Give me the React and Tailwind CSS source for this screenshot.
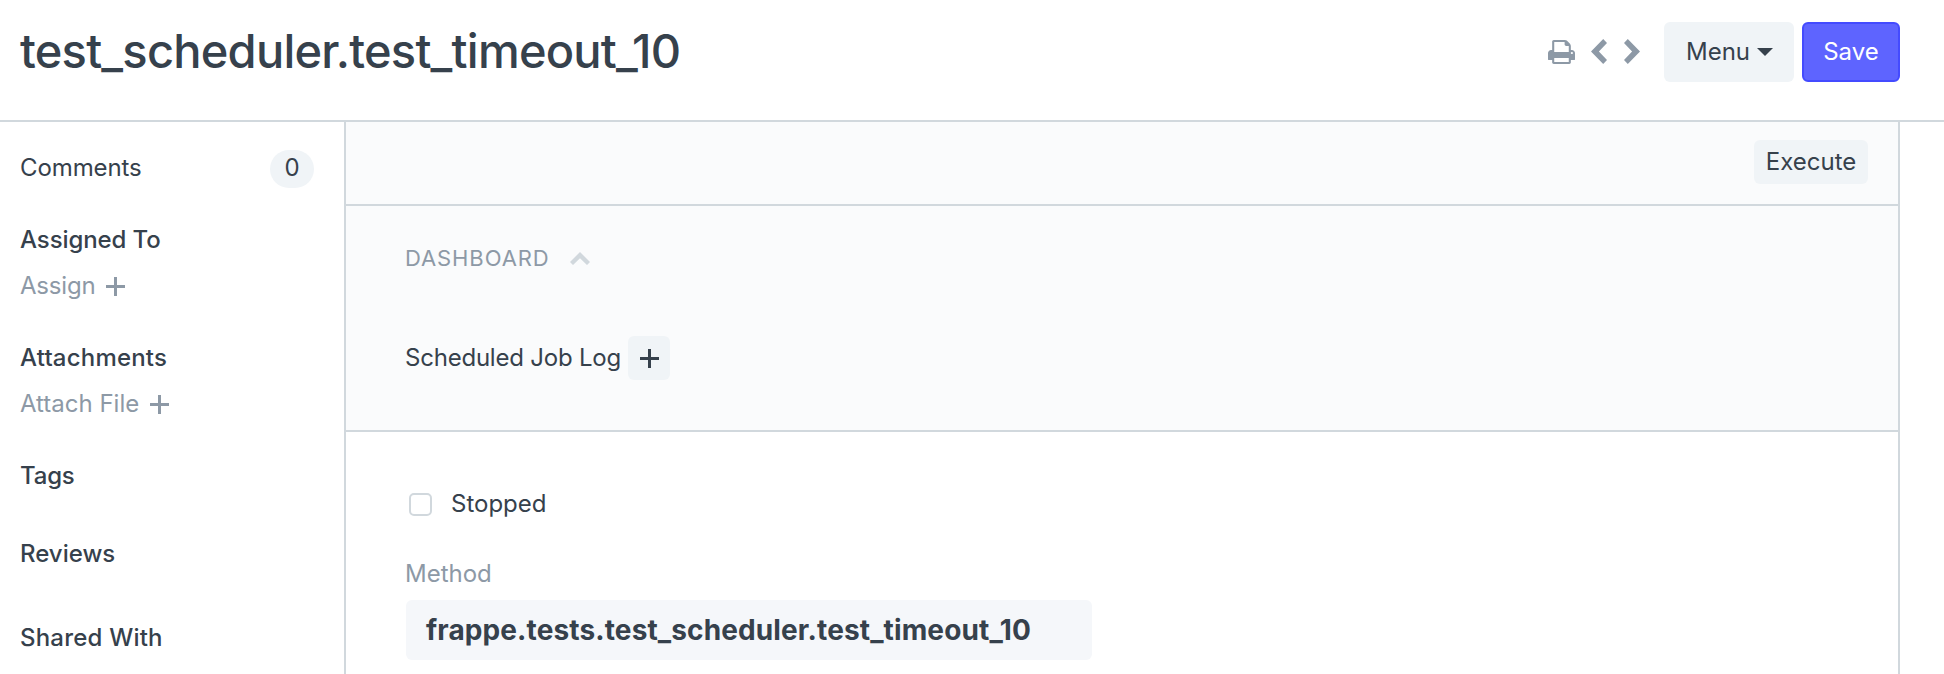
function PrintIcon() {
  return (
    <svg viewBox="0 128 1664 1536" preserveAspectRatio="none" className="h-6 w-[27px]" fill="currentColor">
      <path d="M384 1536h896v-256h-896v256zM384 896h896v-384h-160q-40 0-68-28t-28-68v-160h-640v640zM1536 960q0-26-19-45t-45-19-45 19-19 45 19 45 45 19 45-19 19-45zM1664 960v416q0 13-9.5 22.5t-22.5 9.5h-224v160q0 40-28 68t-68 28h-960q-40 0-68-28t-28-68v-160h-224q-13 0-22.5-9.5t-9.5-22.5v-416q0-79 56.5-135.5t135.5-56.5h64v-544q0-40 28-68t68-28h672q40 0 88 20t76 48l152 152q28 28 48 76t20 88v256h64q79 0 135.5 56.5t56.5 135.5z" />
    </svg>
  );
}

function Chevron({ className = "" }) {
  return (
    <svg viewBox="0 0 16 25" className={`h-[25px] w-4 ${className}`} fill="currentColor">
      <path d="M12.2 0 16 3.9 7.9 12.5 16 21.1 12.2 25 0 12.5z" />
    </svg>
  );
}

function CollapseIcon() {
  return (
    <svg viewBox="0 0 20 13" className="h-[13px] w-5 text-[#d1d8dd]" fill="currentColor">
      <path d="M10 0 20 10 17 13 10 6.2 3 13 0 10z" />
    </svg>
  );
}

function Plus() {
  return (
    <svg viewBox="0 0 19 19" className="size-[19px]" fill="none" stroke="currentColor" strokeWidth="3">
      <path d="M9.5 0v19M0 9.5h19" />
    </svg>
  );
}

function Heading({ children, className = "" }) {
  return <h4 className={`font-medium leading-[34px] ${className}`}>{children}</h4>;
}

function AddLink({ children, className = "" }) {
  return (
    <a className={`mt-3 flex h-[34px] items-center leading-[34px] text-[#8d99a6] ${className}`}>
      <span>{children}</span>
      <span className="mt-px">
        <Plus />
      </span>
    </a>
  );
}

function Header() {
  return (
    <header className="flex h-[122px] items-start justify-between border-b-2 border-[#d1d8dd] pl-5 pr-11 pt-[22px]">
      <h1 className="text-[47px] font-medium leading-[58px] tracking-[-0.77px]">test_scheduler.test_timeout_10</h1>
      <div className="flex h-[60px] items-center text-[#8d99a6]">
        <PrintIcon />
        <Chevron className="-mt-[2px] ml-4" />
        <Chevron className="-mt-[2px] ml-[17px] rotate-180" />
        <button className="ml-6 flex h-[60px] w-[130px] items-center rounded-md bg-[#f0f4f7] pl-[22px] text-[#36414c]">
          <span>Menu</span>
          <svg viewBox="0 0 16 8" className="ml-[7px] h-2 w-4" fill="currentColor">
            <path d="M0 0h16L8 8z" />
          </svg>
        </button>
        <button className="ml-2 h-[60px] w-[98px] rounded-md border-2 border-[#444bff] bg-[#5e64ff] text-white">Save</button>
      </div>
    </header>
  );
}

function Sidebar() {
  return (
    <aside className="w-[344px] shrink-0 pl-5 pr-[30px] pt-7">
      <div className="flex h-[38px] items-start justify-between leading-[36px]">
        <span className="tracking-[-0.1px]">Comments</span>
        <span className="h-[38px] w-11 rounded-[19px] bg-[#f0f4f7] text-center">0</span>
      </div>
      <Heading className="mt-[35px] tracking-[-0.1px]">Assigned To</Heading>
      <AddLink className="gap-[11px] tracking-[-0.2px]">Assign</AddLink>
      <Heading className="mt-[38px] tracking-[0.2px]">Attachments</Heading>
      <AddLink className="gap-[11px]">Attach File</AddLink>
      <Heading className="mt-[38px] tracking-[-0.2px]">Tags</Heading>
      <Heading className="mt-11">Reviews</Heading>
      <Heading className="mt-[50px] tracking-[0.2px]">Shared With</Heading>
    </aside>
  );
}

function Form() {
  return (
    <main className="flex w-[1556px] shrink-0 flex-col border-x-2 border-[#d1d8dd]">
      <div className="flex h-[84px] shrink-0 justify-end border-b-2 border-[#d1d8dd] bg-[#fafbfc] pr-[30px] pt-[18px]">
        <button className="h-11 w-[114px] rounded-md bg-[#f0f4f7] pb-px">Execute</button>
      </div>
      <section className="h-[226px] shrink-0 border-b-2 border-[#d1d8dd] bg-[#fafbfc] pl-[59px] pt-[35px]">
        <div className="flex h-[34px] items-center gap-[20px]">
          <h2 className="text-[22px] leading-[34px] tracking-[0.9px] text-[#8d99a6]">DASHBOARD</h2>
          <CollapseIcon />
        </div>
        <div className="mt-[61px] flex h-11 items-center">
          <span className="w-[223px] pb-px tracking-[-0.22px]">Scheduled Job Log</span>
          <button className="flex h-11 w-[42px] items-center justify-center rounded-md bg-[#f0f4f7]">
            <Plus />
          </button>
        </div>
      </section>
      <section className="flex flex-col pl-[60px] pt-[55px]">
        <label className="flex h-[34px] items-center">
          <span className="ml-[3px] mt-px size-[23px] rounded-[5px] border-2 border-[#d1d8dd]" />
          <span className="ml-[19px] leading-[34px]">Stopped</span>
        </label>
        <span className="-ml-px mt-9 leading-[34px] text-[#8d99a6]">Method</span>
        <div className="mt-[9px] h-[60px] w-[686px] rounded-md bg-[#f5f7fa] pl-5 text-[28px] font-bold leading-[60px] tracking-[0.12px]">
          frappe.tests.test_scheduler.test_timeout_10
        </div>
      </section>
    </main>
  );
}

export default function App() {
  return (
    <div className="flex h-[674px] w-[1944px] flex-col overflow-hidden bg-white font-['Inter',sans-serif] text-2xl text-[#36414c]">
      <Header />
      <div className="flex min-h-0 flex-1">
        <Sidebar />
        <Form />
      </div>
    </div>
  );
}
